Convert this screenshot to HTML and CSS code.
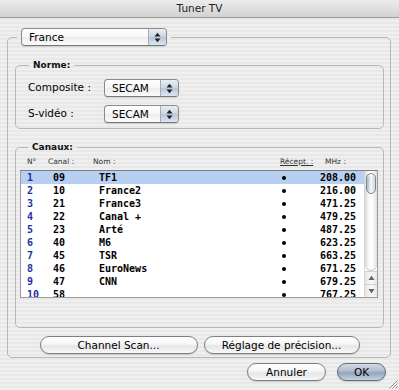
FILE: index.html
```html
<!DOCTYPE html>
<html>
<head>
<meta charset="utf-8">
<title>Tuner TV</title>
<link rel="stylesheet" href="styles.css">
</head>
<body>
<div class="window">
  <div class="titlebar">Tuner TV</div>
  <div class="content">
    <fieldset class="group outer">
      <legend class="outer-legend">
        <div class="popup popup-country">
          <span class="popup-label">France</span>
          <span class="popup-arrows"><svg width="7" height="11" viewBox="0 0 7 11"><path d="M0.5 4.5 L3.5 0.8 L6.5 4.5 Z M0.5 6.5 L3.5 10.2 L6.5 6.5 Z" fill="#222"/></svg></span>
        </div>
      </legend>

      <fieldset class="group norme">
        <legend class="group-legend">Norme:</legend>
        <div class="form-row">
          <span class="form-label">Composite :</span>
          <div class="popup popup-small">
            <span class="popup-label">SECAM</span>
            <span class="popup-arrows"><svg width="7" height="11" viewBox="0 0 7 11"><path d="M0.5 4.5 L3.5 0.8 L6.5 4.5 Z M0.5 6.5 L3.5 10.2 L6.5 6.5 Z" fill="#222"/></svg></span>
          </div>
        </div>
        <div class="form-row">
          <span class="form-label">S-vidéo :</span>
          <div class="popup popup-small">
            <span class="popup-label">SECAM</span>
            <span class="popup-arrows"><svg width="7" height="11" viewBox="0 0 7 11"><path d="M0.5 4.5 L3.5 0.8 L6.5 4.5 Z M0.5 6.5 L3.5 10.2 L6.5 6.5 Z" fill="#222"/></svg></span>
          </div>
        </div>
      </fieldset>

      <fieldset class="group canaux">
        <legend class="group-legend canaux-legend">Canaux:</legend>
        <div class="col-headers">
          <span>N°</span>
          <span>Canal :</span>
          <span>Nom :</span>
          <span class="sorted">Récept. :</span>
          <span>MHz :</span>
        </div>
        <div class="list">
          <div class="rows">
            <div class="row selected"><span class="num">1</span><span>09</span><span>TF1</span><span class="dot"></span><span class="mhz">208.00</span></div>
            <div class="row"><span class="num">2</span><span>10</span><span>France2</span><span class="dot"></span><span class="mhz">216.00</span></div>
            <div class="row"><span class="num">3</span><span>21</span><span>France3</span><span class="dot"></span><span class="mhz">471.25</span></div>
            <div class="row"><span class="num">4</span><span>22</span><span>Canal +</span><span class="dot"></span><span class="mhz">479.25</span></div>
            <div class="row"><span class="num">5</span><span>23</span><span>Arté</span><span class="dot"></span><span class="mhz">487.25</span></div>
            <div class="row"><span class="num">6</span><span>40</span><span>M6</span><span class="dot"></span><span class="mhz">623.25</span></div>
            <div class="row"><span class="num">7</span><span>45</span><span>TSR</span><span class="dot"></span><span class="mhz">663.25</span></div>
            <div class="row"><span class="num">8</span><span>46</span><span>EuroNews</span><span class="dot"></span><span class="mhz">671.25</span></div>
            <div class="row"><span class="num">9</span><span>47</span><span>CNN</span><span class="dot"></span><span class="mhz">679.25</span></div>
            <div class="row"><span class="num">10</span><span>58</span><span></span><span class="dot"></span><span class="mhz">767.25</span></div>
          </div>
          <div class="scrollbar">
            <div class="track"><div class="thumb"></div></div>
            <div class="arrow"><svg width="7" height="6" viewBox="0 0 7 6"><path d="M0.5 5 L3.5 0.5 L6.5 5 Z" fill="#666"/></svg></div>
            <div class="arrow"><svg width="7" height="6" viewBox="0 0 7 6"><path d="M0.5 1 L3.5 5.5 L6.5 1 Z" fill="#666"/></svg></div>
          </div>
        </div>
      </fieldset>

      <div class="btn-row">
        <button class="btn btn-scan">Channel Scan...</button>
        <button class="btn btn-fine">Réglage de précision...</button>
      </div>
    </fieldset>

    <div class="dialog-buttons">
      <button class="btn btn-cancel">Annuler</button>
      <button class="btn btn-ok">OK</button>
    </div>
  </div>
  <svg class="grip" width="11" height="11" viewBox="0 0 11 11">
    <path d="M10.5 2.5 L2.5 10.5 M10.5 5.5 L5.5 10.5 M10.5 8.5 L8.5 10.5" stroke="#8a8a8a" stroke-width="1"/>
    <path d="M10.5 3.5 L3.5 10.5 M10.5 6.5 L6.5 10.5" stroke="#fff" stroke-width="1"/>
  </svg>
</div>
</body>
</html>
```

FILE: styles.css
```css
* { box-sizing: border-box; }
html, body { margin: 0; padding: 0; }
body {
  width: 399px;
  height: 390px;
  overflow: hidden;
  font-family: "DejaVu Sans", sans-serif;
  font-size: 10.5px;
  color: #000;
}
.window {
  position: relative;
  width: 399px;
  height: 390px;
  background: repeating-linear-gradient(to bottom, #efefef 0 2px, #e8e8e8 2px 4px);
}
.titlebar {
  height: 18px;
  border-bottom: 1px solid #9a9a9a;
  background: linear-gradient(#ececec, #d2d2d2);
  display: flex;
  align-items: center;
  justify-content: center;
  color: #222;
  font-size: 10.5px;
  line-height: 17px;
}
.content {
  padding: 10px 8px 0 7px;
}
.group {
  margin: 0;
  border: 1px solid #b7b7b7;
  border-radius: 5px;
  min-width: 0;
}
.outer {
  padding: 13px 6px 3px 7px;
}
.outer-legend {
  margin-left: 2px;
  padding: 0 4px;
  line-height: 0;
}
.group-legend {
  font-weight: bold;
  font-size: 9px;
  line-height: 12px;
  padding: 0 4px;
  margin-left: 1px;
  color: #111;
}
.canaux-legend { margin-left: 8px; }

/* popups */
.popup {
  display: flex;
  height: 18px;
  border: 1px solid #8a8a8a;
  border-bottom-color: #777;
  border-radius: 4px;
  background: linear-gradient(#ffffff 0%, #f7f7f7 50%, #ececec 51%, #fbfbfb 100%);
  box-shadow: 0 1px 1px rgba(0,0,0,0.12);
  overflow: hidden;
}
.popup-label {
  flex: 1;
  line-height: 16px;
  padding-left: 7px;
  white-space: nowrap;
}
.popup-country { width: 146px; }
.popup-small { width: 75px; }
.popup-arrows {
  width: 18px;
  border-left: 1px solid #a3adb9;
  background: linear-gradient(#e9eef5 0%, #c9d4e2 50%, #b7c5d8 51%, #dde6f1 100%);
  display: flex;
  align-items: center;
  justify-content: center;
}

/* Norme */
.group.norme {
  padding: 8px 10px 5px 12px;
}
.form-row {
  display: flex;
  align-items: center;
  height: 18px;
}
.form-row + .form-row { margin-top: 8px; }
.form-label {
  width: 76px;
  line-height: 14px;
  margin-top: -3px;
}

/* Canaux */
.group.canaux {
  margin-top: 12px;
  padding: 4px 5px 29px 4px;
}
.col-headers {
  display: grid;
  grid-template-columns: 21px 45px 187px 45px 1fr;
  padding-left: 7px;
  height: 10px;
  line-height: 10px;
  font-size: 7.5px;
  color: #333;
  margin-bottom: 3px;
  white-space: nowrap;
}
.sorted { text-decoration: underline; }
.list {
  display: flex;
  height: 128px;
  border: 1px solid #9b9b9b;
  border-top-color: #7f7f7f;
  background: #fff;
}
.rows {
  flex: 1;
  overflow: hidden;
  font-family: "DejaVu Sans Mono", monospace;
  font-weight: bold;
  font-size: 10px;
}
.row {
  display: grid;
  grid-template-columns: 26px 46px 1fr 12px 66px;
  height: 13px;
  line-height: 13px;
  padding: 0 8px 0 6px;
  white-space: nowrap;
}
.row.selected { background: #b7d0f2; }
.num { color: #1b2fa8; }
.dot {
  align-self: center;
  justify-self: center;
  width: 4px;
  height: 4px;
  border-radius: 50%;
  background: #000;
}
.mhz { text-align: right; }

.scrollbar {
  width: 13px;
  display: flex;
  flex-direction: column;
  border-left: 1px solid #d6d6d6;
  background: #fff;
}
.track {
  flex: 1;
  background: linear-gradient(to right, #d9d9d9 0, #f4f4f4 3px, #ffffff 6px, #f4f4f4 9px, #dcdcdc 12px);
  border-bottom: 1px solid #c8c8c8;
  border-radius: 0 0 6px 6px;
  padding: 2px 1px 0 1px;
}
.thumb {
  height: 21px;
  border: 1px solid #7d8793;
  border-radius: 6px;
  background: linear-gradient(to right, #9aa5b1 0%, #e6eaef 35%, #f4f6f8 55%, #c4ccd5 100%);
  box-shadow: inset 0 1px 2px rgba(255,255,255,0.8);
}
.arrow {
  height: 13px;
  display: flex;
  align-items: center;
  justify-content: center;
  background: linear-gradient(to right, #e4e4e4, #fafafa 50%, #e8e8e8);
  border-top: 1px solid #d0d0d0;
}

/* buttons */
.btn {
  font-family: "DejaVu Sans", sans-serif;
  font-size: 10.5px;
  color: #000;
  height: 18px;
  padding: 0;
  line-height: 16px;
  border: 1px solid #7f7f7f;
  border-radius: 9px;
  background: linear-gradient(#ffffff 0%, #f6f6f6 45%, #e6e6e6 55%, #f7f7f7 100%);
  box-shadow: 0 1px 1px rgba(0,0,0,0.15);
}
.btn-row {
  display: flex;
  justify-content: center;
  gap: 6px;
  margin-top: 8px;
}
.btn-scan { width: 158px; }
.btn-fine { width: 156px; }
.dialog-buttons {
  display: flex;
  justify-content: flex-end;
  gap: 11px;
  margin-top: 5px;
  padding-right: 5px;
}
.btn-cancel { width: 79px; }
.btn-ok {
  width: 49px;
  border-color: #5f6c7c;
  background: linear-gradient(#d3dbe5 0%, #aebccc 45%, #93a4b9 55%, #c6d3e2 100%);
}
.grip {
  position: absolute;
  right: 1px;
  bottom: 1px;
}
```
